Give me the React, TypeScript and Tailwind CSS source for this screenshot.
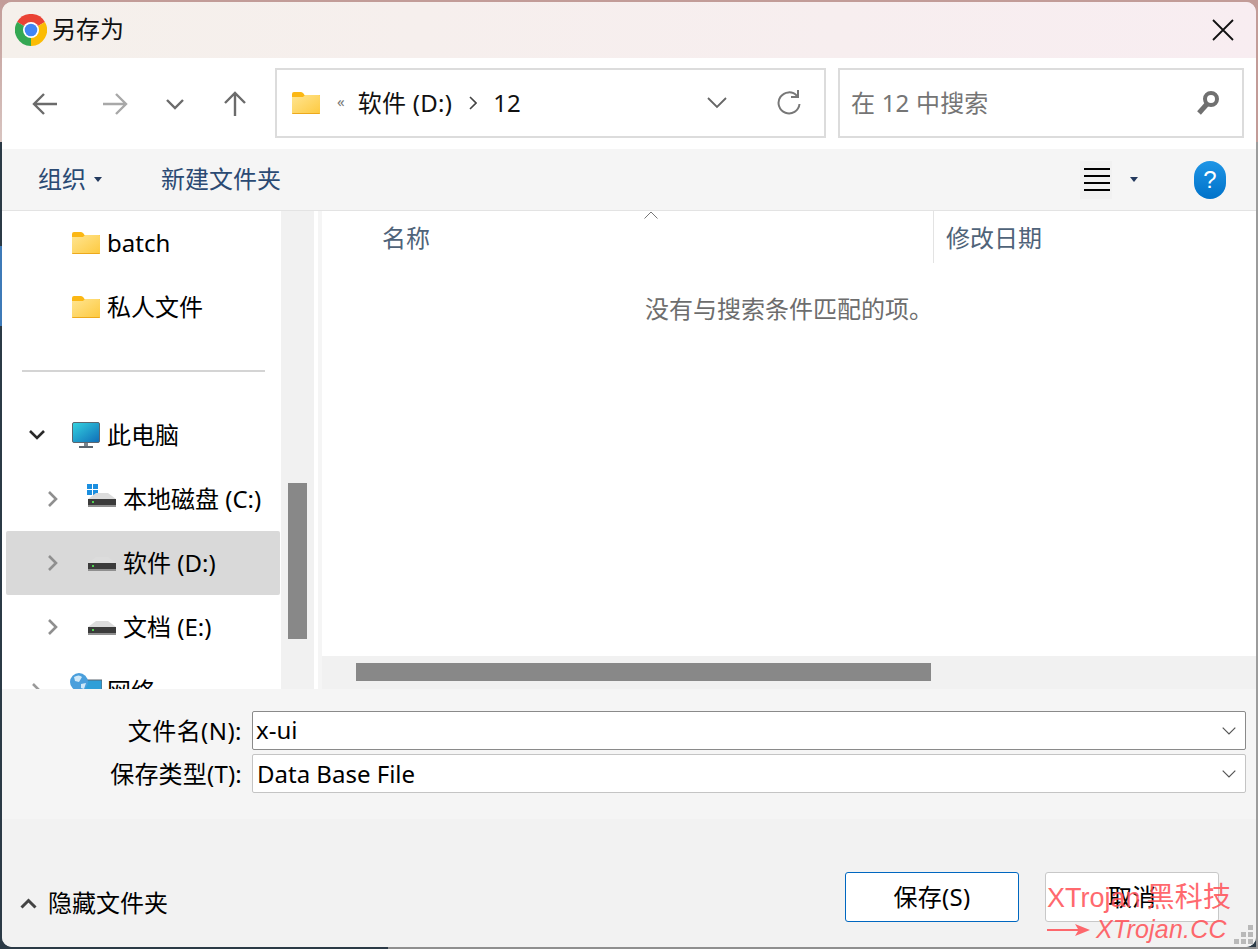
const font = "font-['Noto_Sans','Noto_Sans_CJK_SC',sans-serif]";

const ChromeLogo = () => (
  <svg width="32" height="32" viewBox="0 0 32 32">
    <path d="M16 16 L2.1 8 A16 16 0 0 1 29.9 8 Z" fill="#ea4335" />
    <path d="M16 16 L29.9 8 A16 16 0 0 1 16 32 Z" fill="#fbbc04" />
    <path d="M16 16 L16 32 A16 16 0 0 1 2.1 8 Z" fill="#34a853" />
    <circle cx="16" cy="16" r="8" fill="#fff" />
    <circle cx="16" cy="16" r="6.3" fill="#4285f4" />
  </svg>
);

const Folder = ({ w = 28, h = 22 }: { w?: number; h?: number }) => (
  <svg width={w} height={h} viewBox="0 0 28 22">
    <defs>
      <linearGradient id="fg" x1="0" y1="0" x2="1" y2="1">
        <stop offset="0" stopColor="#ffe591" />
        <stop offset="1" stopColor="#fdc93f" />
      </linearGradient>
    </defs>
    <path d="M0 2 Q0 0 2 0 H9 Q10.5 0 11.5 1.5 L12.5 3 H28 V6 H0 Z" fill="#fbb714" />
    <path d="M0 5 H11 L13 3 H27 Q28 3 28 4 V21 Q28 22 27 22 H1 Q0 22 0 21 Z" fill="url(#fg)" />
    <path d="M0 21 H28 V21 Q28 22 27 22 H1 Q0 22 0 21 Z" fill="#eda91c" />
  </svg>
);

const Drive = ({ win = false }: { win?: boolean }) => (
  <svg className="-ml-px" width="30" height="30" viewBox="0 0 30 30">
    {win && (
      <g fill="#1b8fe0">
        <rect x="0" y="0" width="5" height="5" />
        <rect x="6" y="0" width="5" height="5" />
        <rect x="0" y="6" width="5" height="5" />
        <rect x="6" y="6" width="5" height="5" />
      </g>
    )}
    <path d="M9 9 H21 L29 15 H1 Z" fill="#dcdcdc" />
    <rect x="1" y="15" width="28" height="7" fill="#3b3b3b" />
    <rect x="1" y="21" width="28" height="2" fill="#8f8f8f" />
    <rect x="5" y="17" width="2" height="2" fill="#4fd04f" />
  </svg>
);

const Monitor = () => (
  <svg width="28" height="26" viewBox="0 0 28 26">
    <defs>
      <linearGradient id="mg" x1="0" y1="0" x2="1" y2="1">
        <stop offset="0" stopColor="#34d3e0" />
        <stop offset="1" stopColor="#0f6cb8" />
      </linearGradient>
    </defs>
    <rect x="0.5" y="0.5" width="27" height="20" rx="1.5" fill="url(#mg)" stroke="#5c6670" />
    <rect x="12" y="21" width="4" height="3" fill="#7c868e" />
    <rect x="7" y="24" width="14" height="2" fill="#5c6670" />
  </svg>
);

const Globe = () => (
  <svg className="-ml-[2px] -mt-[14px]" width="32" height="22" viewBox="0 0 32 22">
    <rect x="12" y="7" width="20" height="15" fill="#2f9fd8" stroke="#5c6670" />
    <circle cx="9" cy="9" r="9" fill="#4a9fdc" />
    <path d="M4 4 Q9 1 12 4 L9 9 L5 8 Z M11 11 L16 10 L14 16 L11 15 Z" fill="#cfe8f8" />
  </svg>
);

const Chevron = ({ dir, color = "#8f8f8f" }: { dir: "right" | "down"; color?: string }) => (
  <svg width="16" height="20" viewBox="0 0 16 20" fill="none" stroke={color} strokeWidth="2.6">
    {dir === "right" ? <path d="M4 3 L11 10 L4 17" /> : <path d="M1 6 L8 13 L15 6" />}
  </svg>
);

const Caret = ({ color = "#243a5e" }: { color?: string }) => (
  <svg width="8" height="5" viewBox="0 0 8 5">
    <path d="M0 0 H8 L4 5 Z" fill={color} />
  </svg>
);

const SmallDown = ({ className = "" }: { className?: string }) => (
  <svg className={className} width="14" height="8" viewBox="0 0 14 8" fill="none" stroke="#555" strokeWidth="1.2">
    <path d="M0.7 0.7 L7 7 L13.3 0.7" />
  </svg>
);

const SideRow = ({
  indent,
  arrow,
  icon,
  label,
  selected,
}: {
  indent: string;
  arrow?: React.ReactNode;
  icon: React.ReactNode;
  label: string;
  selected?: boolean;
}) => (
  <div className={`h-16 shrink-0 ml-1 mr-px rounded-[2px] flex items-center ${indent} ${selected ? "bg-[#d9d9d9]" : ""}`}>
    <div className="w-[62px] shrink-0 flex justify-center">{arrow}</div>
    <div className="w-[4px] shrink-0" />
    <div className="w-[35px] shrink-0 flex justify-start">{icon}</div>
    <span className="text-black whitespace-nowrap">{label}</span>
  </div>
);

export default function App() {
  return (
    <div className={`w-[1258px] h-[949px] overflow-hidden flex text-2xl leading-none ${font}`}>
      {/* desktop peeking out around the window */}
      <div className="w-[2px] flex flex-col">
        <div className="h-[142px] bg-[linear-gradient(#c29c98,#d8c4c0)]" />
        <div className="h-[104px] bg-[#2b3a46]" />
        <div className="h-[80px] bg-[#3d7ab8]" />
        <div className="flex-1 bg-[#2b3a46]" />
      </div>

      <div className="w-[1254px] flex flex-col bg-[linear-gradient(#c29c98_0%,#c29c98_50%,#2b3a46_50%,#2b3a46_100%)]">
        <div className="h-[2px] shrink-0" />
        <div className="h-[945px] rounded-[10px] overflow-hidden flex flex-col bg-[#f2f2f2]">
          {/* title bar */}
          <div className="h-14 shrink-0 flex items-center justify-between pl-[13px] pr-[22px] bg-[linear-gradient(90deg,#f5f0eb,#f8edf1)]">
            <div className="flex items-center gap-[5px]">
              <ChromeLogo />
              <span className="text-[#111] -mt-[2px]">另存为</span>
            </div>
            <svg width="22" height="22" viewBox="0 0 22 22" fill="none" stroke="#111" strokeWidth="1.8">
              <path d="M1 1 L21 21 M21 1 L1 21" />
            </svg>
          </div>

          {/* nav bar */}
          <div className="h-[91px] shrink-0 bg-white flex items-center">
            <div className="w-[273px] shrink-0 flex items-center">
              <svg className="ml-[30px]" width="26" height="24" viewBox="0 0 26 24" fill="none" stroke="#6b6b6b" strokeWidth="2.4">
                <path d="M25 12 H2 M12 2 L2 12 L12 22" />
              </svg>
              <svg className="ml-11" width="26" height="24" viewBox="0 0 26 24" fill="none" stroke="#a8a8a8" strokeWidth="2.4">
                <path d="M1 12 H24 M14 2 L24 12 L14 22" />
              </svg>
              <svg className="ml-[37px]" width="20" height="12" viewBox="0 0 20 12" fill="none" stroke="#6b6b6b" strokeWidth="2.4">
                <path d="M2 2 L10 10 L18 2" />
              </svg>
              <svg className="ml-[38px]" width="24" height="26" viewBox="0 0 24 26" fill="none" stroke="#6b6b6b" strokeWidth="2.4">
                <path d="M12 25 V2 M2 12 L12 2 L22 12" />
              </svg>
            </div>
            <div className="w-[551px] h-[70px] shrink-0 border-2 border-[#dcdcdc] flex items-center pl-[15px] pr-[23px] -mt-px">
              <Folder />
              <span className="ml-[17px] text-[#777] text-[15px] -mt-[3px]">«</span>
              <span className="ml-[13px] text-[#111] tracking-[0.3px]">软件 (D:)</span>
              <svg className="ml-[17px]" width="8" height="14" viewBox="0 0 8 14" fill="none" stroke="#444" strokeWidth="1.6">
                <path d="M1 1 L7 7 L1 13" />
              </svg>
              <span className="ml-4 text-[#111]">12</span>
              <svg className="ml-auto" width="20" height="12" viewBox="0 0 20 12" fill="none" stroke="#666" strokeWidth="1.8">
                <path d="M1 1 L10 10 L19 1" />
              </svg>
              <svg className="ml-[50px]" width="24" height="26" viewBox="0 0 24 26" fill="none" stroke="#777" strokeWidth="2">
                <path d="M20 6 A10.5 10.5 0 1 0 22.5 14" />
                <path d="M21 0 V7 H14" />
              </svg>
            </div>
            <div className="ml-[12px] w-[406px] h-[70px] shrink-0 border-2 border-[#dcdcdc] flex items-center justify-between pl-[11px] pr-[22px] -mt-px">
              <span className="text-[#757575] tracking-[0.2px]">在 12 中搜索</span>
              <svg width="24" height="26" viewBox="0 0 24 26" fill="none" stroke="#707070">
                <circle cx="15" cy="9" r="6" strokeWidth="4" />
                <path d="M11 14 L3 23" strokeWidth="5" />
              </svg>
            </div>
          </div>

          {/* toolbar */}
          <div className="h-[62px] shrink-0 bg-[#f5f5f5] border-b border-[#e3e3e3] flex items-center text-[#2b4a73]">
            <span className="ml-9 -mt-[2px]">组织</span>
            <span className="ml-2">
              <Caret />
            </span>
            <span className="ml-[59px] -mt-[2px]">新建文件夹</span>
            <div className="ml-auto flex items-center">
              <div className="w-8 h-[38px] bg-[#f1f1f1] flex flex-col justify-center gap-[5px] pl-[4px] pr-[2px]">
                <div className="h-[2px] bg-black" />
                <div className="h-[2px] bg-black" />
                <div className="h-[2px] bg-black" />
                <div className="h-[2px] bg-black" />
              </div>
              <span className="ml-[18px]">
                <Caret />
              </span>
              <div className="ml-[56px] mr-[30px] w-8 h-[38px] rounded-full bg-[linear-gradient(#1e95e6,#0072c9)] text-white flex items-center justify-center text-[24px] font-['Liberation_Sans',sans-serif]">
                ?
              </div>
            </div>
          </div>

          {/* panes */}
          <div className="h-[478px] shrink-0 flex bg-white">
            <div className="w-[279px] shrink-0 overflow-hidden flex flex-col">
              <SideRow indent="" icon={<Folder />} label="batch" />
              <SideRow indent="" icon={<Folder />} label="私人文件" />
              <div className="h-16 shrink-0 flex items-center pl-5 pr-[16px]">
                <div className="w-full h-[2px] bg-[#d4d4d4]" />
              </div>
              <SideRow indent="" arrow={<Chevron dir="down" color="#2a2a2a" />} icon={<Monitor />} label="此电脑" />
              <SideRow indent="pl-4" arrow={<Chevron dir="right" />} icon={<Drive win />} label="本地磁盘 (C:)" />
              <SideRow indent="pl-4" selected arrow={<Chevron dir="right" />} icon={<Drive />} label="软件 (D:)" />
              <SideRow indent="pl-4" arrow={<Chevron dir="right" />} icon={<Drive />} label="文档 (E:)" />
              <SideRow indent="" arrow={<Chevron dir="right" color="#9a9a9a" />} icon={<Globe />} label="网络" />
            </div>

            <div className="w-[33px] shrink-0 bg-[#f1f1f1] flex flex-col items-center pt-[272px] pr-[1px]">
              <div className="w-[19px] h-[156px] bg-[#888]" />
            </div>
            <div className="w-1 shrink-0" />
            <div className="w-1 shrink-0 bg-[#f5f5f5]" />

            <div className="flex-1 min-w-0 flex flex-col">
              <div className="relative h-[52px] shrink-0 flex text-[#4f6379]">
                <svg className="absolute left-[322px] top-0" width="14" height="8" viewBox="0 0 14 8" fill="none" stroke="#777" strokeWidth="1">
                  <path d="M0.5 7.5 L7 1 L13.5 7.5" />
                </svg>
                <div className="w-[612px] border-r border-[#e3e3e3] pl-[60px] pt-[15px]">名称</div>
                <div className="pl-[12px] pt-[15px]">修改日期</div>
              </div>
              <div className="flex-1 pt-[34px] pl-[323px] text-[#6d6d6d]">没有与搜索条件匹配的项。</div>
              <div className="h-[33px] shrink-0 bg-[#f1f1f1] pt-[7px] pl-[34px]">
                <div className="w-[575px] h-[18px] bg-[#888]" />
              </div>
            </div>
          </div>

          {/* file name and type */}
          <div className="h-[130px] shrink-0 bg-[#f5f5f5] pt-[22px] pr-[10px] flex flex-col gap-1 text-black">
            <div className="flex items-center">
              <div className="w-[240px] shrink-0 text-right tracking-[0.45px]">文件名(N):</div>
              <div className="ml-[10px] flex-1 h-[39px] bg-white border border-[#8a8a8a] rounded-[2px] flex items-center justify-between pl-[3px] pr-[9px]">
                <span className="-mt-[2px]">x-ui</span>
                <SmallDown />
              </div>
            </div>
            <div className="flex items-center">
              <div className="w-[240px] shrink-0 text-right tracking-[0.2px]">保存类型(T):</div>
              <div className="ml-[10px] flex-1 h-[39px] bg-white border border-[#c4c4c4] rounded-[2px] flex items-center justify-between pl-1 pr-[9px]">
                <span>Data Base File</span>
                <SmallDown />
              </div>
            </div>
          </div>

          {/* buttons */}
          <div className="relative flex-1 min-h-0 bg-[#f2f2f2] flex items-end justify-between pr-[37px] pb-[25px] text-black">
            <div className="flex items-center gap-[11px] pl-[18px] pb-[7px]">
              <svg width="17" height="11" viewBox="0 0 17 11" fill="none" stroke="#444" strokeWidth="3">
                <path d="M1.5 9.5 L8.5 2.5 L15.5 9.5" />
              </svg>
              <span>隐藏文件夹</span>
            </div>
            <div className="flex gap-[26px]">
              <button className="w-[174px] h-[50px] bg-white border border-[#0067c0] rounded-[3px] tracking-[0.3px]">保存(S)</button>
              <button className="w-[174px] h-[50px] bg-white border border-[#c8c8c8] rounded-[3px]">取消</button>
            </div>
            {/* watermark laid over the buttons */}
            <div className="absolute left-[1045px] top-[65px] text-[#ff4f55] opacity-85 pointer-events-none whitespace-nowrap">
              <div className="flex items-center text-[27px] font-['Liberation_Sans','Noto_Sans_CJK_SC',sans-serif]">
                <span>XTrojan</span>
                <span className="ml-[6px] text-[28px] tracking-[0.2px]">黑科技</span>
              </div>
              <div className="flex items-center gap-[6px] mt-[5px]">
                <svg width="43" height="12" viewBox="0 0 43 12" fill="#ff4f55">
                  <path d="M0 5 H31 L28 0 L43 6 L28 12 L31 7 H0 Z" />
                </svg>
                <span className="text-[25px] italic tracking-[0.2px] font-['Liberation_Sans',sans-serif]">XTrojan.CC</span>
              </div>
            </div>
            <svg className="absolute right-[1px] bottom-[1px]" width="22" height="22" viewBox="0 0 22 22" fill="#b9b9b9">
              <rect x="15" y="1" width="5" height="5" />
              <rect x="8" y="8" width="5" height="5" />
              <rect x="15" y="8" width="5" height="5" />
              <rect x="1" y="15" width="5" height="5" />
              <rect x="8" y="15" width="5" height="5" />
              <rect x="15" y="15" width="5" height="5" />
            </svg>
          </div>
        </div>
        <div className="h-[2px] shrink-0 flex">
          <div className="w-[386px]" />
          <div className="flex-1 bg-[#8f8f8f]" />
        </div>
      </div>

      <div className="w-[2px] flex flex-col">
        <div className="h-[142px] bg-[#c29c98]" />
        <div className="flex-1 bg-[#9c9c9c]" />
      </div>
    </div>
  );
}
